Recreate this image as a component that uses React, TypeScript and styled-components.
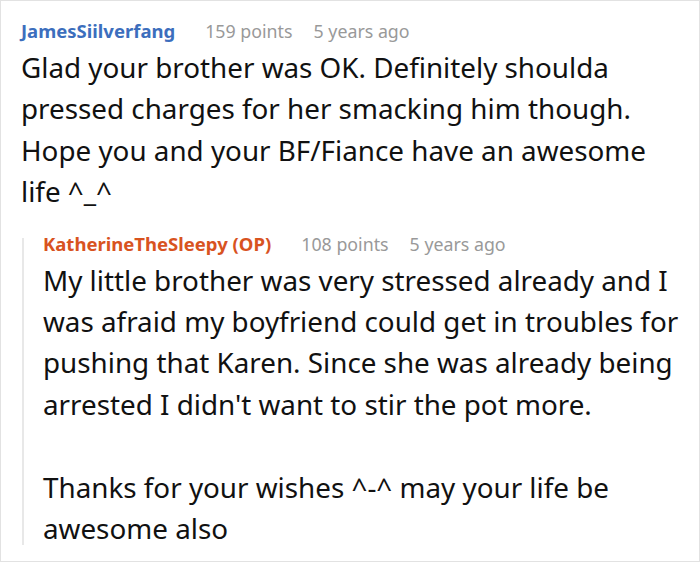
import React from 'react'
import styled, { createGlobalStyle } from 'styled-components'

const GlobalStyle = createGlobalStyle`
  html, body {
    margin: 0;
    padding: 0;
    background: #fff;
  }
  body {
    font-family: "Noto Sans", "Open Sans", Arial, sans-serif;
    color: #111;
  }
`

// outer card holding the thread
const Card = styled.div`
  box-sizing: border-box;
  width: 700px;
  height: 562px;
  border: 1px solid #e2e2e2;
  padding: 15px 10px 0 20px;
  overflow: hidden;
`

const Comment = styled.div`
  display: flex;
  flex-direction: column;
`

const Meta = styled.div`
  display: flex;
  align-items: baseline;
  line-height: 30px;
`

const Author = styled.span<{ $op?: boolean }>`
  font-size: 18.5px;
  font-weight: 700;
  color: ${p => (p.$op ? '#d8531f' : '#3c6ebd')};
`

const Stat = styled.span<{ $gap: number }>`
  font-size: 17.8px;
  color: #999;
  margin-left: ${p => p.$gap}px;
`

const Body = styled.p`
  margin: 0;
  font-size: 27.8px;
  line-height: 41.4px;
  color: #111;
`

const Paragraphs = styled.div`
  display: flex;
  flex-direction: column;
  gap: 41.4px;
  margin-top: 1px;
`

// nested replies get a grey rule down the left side, starting just under the name
const Replies = styled.div`
  position: relative;
  margin-top: 16px;
  padding-left: 22px;

  &::before {
    content: '';
    position: absolute;
    left: 1px;
    top: 9px;
    bottom: 4px;
    width: 2px;
    background: #e8e8e8;
  }
`

interface CommentData {
  author: string
  op?: boolean
  points: number
  age: string
  paragraphs: string[]
}

const parent: CommentData = {
  author: 'JamesSiilverfang',
  points: 159,
  age: '5 years ago',
  paragraphs: [
    'Glad your brother was OK. Definitely shoulda pressed charges for her smacking him though. Hope you and your BF/Fiance have an awesome life ^_^',
  ],
}

const reply: CommentData = {
  author: 'KatherineTheSleepy (OP)',
  op: true,
  points: 108,
  age: '5 years ago',
  paragraphs: [
    "My little brother was very stressed already and I was afraid my boyfriend could get in troubles for pushing that Karen. Since she was already being arrested I didn't want to stir the pot more.",
    'Thanks for your wishes ^-^ may your life be awesome also',
  ],
}

const CommentBlock = ({ data, children }: { data: CommentData; children?: React.ReactNode }) => (
  <Comment>
    <Meta>
      <Author $op={data.op}>{data.author}</Author>
      <Stat $gap={30}>{data.points} points</Stat>
      <Stat $gap={21}>{data.age}</Stat>
    </Meta>
    <Paragraphs>
      {data.paragraphs.map((p, i) => (
        <Body key={i}>{p}</Body>
      ))}
    </Paragraphs>
    {children}
  </Comment>
)

const App = () => (
  <>
    <GlobalStyle />
    <Card>
      <CommentBlock data={parent}>
        <Replies>
          <CommentBlock data={reply} />
        </Replies>
      </CommentBlock>
    </Card>
  </>
)

export default App
